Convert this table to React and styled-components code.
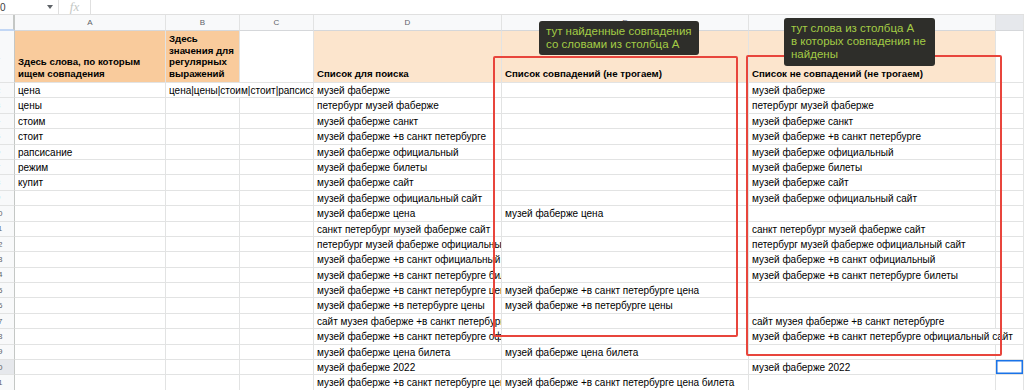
import React from "react";
import styled, { createGlobalStyle } from "styled-components";

const COLS = "15px 151px 74px 74px 188px 247px 247px 1fr";
const ROW_H = 15.4;
const GRID = "#e2e3e3";

const rows = [
  { a: "цена", b: "цена|цены|стоим|стоит|рапсисание|режим|купит", d: "музей фаберже", f: "музей фаберже" },
  { a: "цены", d: "петербург музей фаберже", f: "петербург музей фаберже" },
  { a: "стоим", d: "музей фаберже санкт", f: "музей фаберже санкт" },
  { a: "стоит", d: "музей фаберже +в санкт петербурге", f: "музей фаберже +в санкт петербурге" },
  { a: "рапсисание", d: "музей фаберже официальный", f: "музей фаберже официальный" },
  { a: "режим", d: "музей фаберже билеты", f: "музей фаберже билеты" },
  { a: "купит", d: "музей фаберже сайт", f: "музей фаберже сайт" },
  { d: "музей фаберже официальный сайт", f: "музей фаберже официальный сайт" },
  { d: "музей фаберже цена", e: "музей фаберже цена" },
  { d: "санкт петербург музей фаберже сайт", f: "санкт петербург музей фаберже сайт" },
  { d: "петербург музей фаберже официальный сайт", f: "петербург музей фаберже официальный сайт" },
  { d: "музей фаберже +в санкт официальный", f: "музей фаберже +в санкт официальный" },
  { d: "музей фаберже +в санкт петербурге билеты", f: "музей фаберже +в санкт петербурге билеты" },
  { d: "музей фаберже +в санкт петербурге цена", e: "музей фаберже +в санкт петербурге цена" },
  { d: "музей фаберже +в петербурге цены", e: "музей фаберже +в петербурге цены" },
  { d: "сайт музея фаберже +в санкт петербурге", f: "сайт музея фаберже +в санкт петербурге" },
  { d: "музей фаберже +в санкт петербурге официальный сайт", f: "музей фаберже +в санкт петербурге официальный сайт" },
  { d: "музей фаберже цена билета", e: "музей фаберже цена билета" },
  { d: "музей фаберже 2022", f: "музей фаберже 2022", selected: true },
  { d: "музей фаберже +в санкт петербурге цена билета", e: "музей фаберже +в санкт петербурге цена билета" },
];

const GlobalStyle = createGlobalStyle`
  body {
    margin: 0;
    background: #fff;
    font-family: "Liberation Sans", Arial, sans-serif;
  }
`;

const Sheet = styled.div`
  position: relative;
  width: 1024px;
  height: 390px;
  overflow: hidden;
  background: #fff;
`;

const FormulaBar = styled.div`
  height: 14px;
  display: flex;
  align-items: center;
  border-bottom: 1px solid #e0e0e0;
`;

const NameBox = styled.div`
  width: 58px;
  height: 100%;
  display: flex;
  align-items: center;
  justify-content: space-between;
  padding-right: 5px;
  box-sizing: border-box;
  font-size: 10px;
  color: #3c4043;
`;

const DropArrow = styled.span`
  width: 0;
  height: 0;
  border-left: 3px solid transparent;
  border-right: 3px solid transparent;
  border-top: 4px solid #5f6368;
`;

const Divider = styled.span`
  width: 1px;
  height: 100%;
  background: #e0e0e0;
`;

const Fx = styled.span`
  width: 31px;
  text-align: center;
  font-family: "Liberation Serif", serif;
  font-style: italic;
  font-size: 13px;
  color: #c4c7c5;
  line-height: 14px;
`;

const Row = styled.div`
  display: grid;
  grid-template-columns: ${COLS};
  height: ${(p) => p.$height}px;
`;

const Corner = styled.div`
  background: #f8f9fa;
  border-right: 2px solid #c4c7c5;
  border-bottom: 2px solid #c2d7f5;
  box-sizing: border-box;
`;

const ColLetter = styled.div`
  display: flex;
  align-items: center;
  justify-content: center;
  background: ${(p) => (p.$selected ? "#e6e8ec" : "#f8f9fa")};
  border-right: 1px solid ${GRID};
  border-bottom: 1px solid #d5d7da;
  font-size: 8px;
  color: #5f6368;
`;

const RowNum = styled.div`
  overflow: hidden;
  background: ${(p) => (p.$selected ? "#e6e8ec" : "#f8f9fa")};
  border-right: 1px solid #c4c7c5;
  border-bottom: 1px solid ${GRID};
  font-size: 8px;
  color: #5f6368;
  display: flex;
  align-items: center;

  span {
    flex: none;
    display: block;
    width: 34px;
    margin-left: -19px;
    text-align: center;
  }
`;

const Cell = styled.div`
  position: relative;
  min-width: 0;
  overflow: hidden;
  white-space: nowrap;
  box-sizing: border-box;
  padding: 0 3px;
  border-right: 1px solid ${GRID};
  border-bottom: 1px solid ${GRID};
  background: ${(p) => p.$tone || "transparent"};
  font-size: 10px;
  line-height: ${ROW_H}px;
  color: #000;
  grid-column: ${(p) => (p.$span ? `span ${p.$span}` : "auto")};
  box-shadow: ${(p) => (p.$selected ? "inset 0 0 0 1.5px #1a73e8" : "none")};
`;

const HeadCell = styled(Cell)`
  display: flex;
  align-items: flex-end;
  padding-bottom: 3px;
  font-size: 9.7px;
  font-weight: bold;
  line-height: 11.4px;
`;

const Highlight = styled.div`
  position: absolute;
  left: ${(p) => p.$x}px;
  top: ${(p) => p.$y}px;
  width: ${(p) => p.$w}px;
  height: ${(p) => p.$h}px;
  border: 2px solid #e8453c;
  border-radius: 2px;
  box-sizing: border-box;
  pointer-events: none;
`;

const Note = styled.div`
  position: absolute;
  left: ${(p) => p.$x}px;
  top: ${(p) => p.$y}px;
  width: ${(p) => p.$w}px;
  height: ${(p) => p.$h}px;
  box-sizing: border-box;
  padding: 4px 7px;
  background: #2e2e2a;
  border-radius: 3px;
  color: #a3cc45;
  font-size: 11.5px;
  line-height: 12.8px;
`;

const ORANGE = "#f9cb9c";
const PEACH = "#fce5cd";

function DataRow({ num, row }) {
  return (
    <Row $height={ROW_H}>
      <RowNum $selected={row.selected}>
        <span>{num}</span>
      </RowNum>
      <Cell>{row.a}</Cell>
      {row.b ? (
        <Cell $span={2}>{row.b}</Cell>
      ) : (
        <>
          <Cell />
          <Cell />
        </>
      )}
      <Cell>{row.d}</Cell>
      <Cell>{row.e}</Cell>
      {row.f && row.f.length > 45 ? (
        <Cell $span={2}>{row.f}</Cell>
      ) : (
        <>
          <Cell>{row.f}</Cell>
          <Cell $selected={row.selected} />
        </>
      )}
    </Row>
  );
}

export default function App() {
  return (
    <>
      <GlobalStyle />
      <Sheet>
        <FormulaBar>
          <NameBox>
            0<DropArrow />
          </NameBox>
          <Divider />
          <Fx>fx</Fx>
          <Divider />
        </FormulaBar>

        <Row $height={16}>
          <Corner />
          {["A", "B", "C", "D", "E", "F"].map((l) => (
            <ColLetter key={l}>{l}</ColLetter>
          ))}
          <ColLetter $selected />
        </Row>

        <Row $height={52}>
          <RowNum>
            <span>1</span>
          </RowNum>
          <HeadCell $tone={ORANGE}>
            <div>
              Здесь слова, по которым
              <br />
              ищем совпадения
            </div>
          </HeadCell>
          <HeadCell $tone={ORANGE}>
            <div>
              Здесь
              <br />
              значения для
              <br />
              регулярных
              <br />
              выражений
            </div>
          </HeadCell>
          <HeadCell />
          <HeadCell $tone={PEACH}>Список для поиска</HeadCell>
          <HeadCell $tone={PEACH}>Список совпадений (не трогаем)</HeadCell>
          <HeadCell $tone={PEACH}>Список не совпадений (не трогаем)</HeadCell>
          <HeadCell />
        </Row>

        {rows.map((row, i) => (
          <DataRow key={i} num={i + 2} row={row} />
        ))}

        <Highlight $x={493} $y={56} $w={245} $h={281} />
        <Highlight $x={746} $y={55} $w={256} $h={301} />

        <Note $x={539} $y={21} $w={160} $h={34}>
          тут найденные совпадения
          <br />
          со словами из столбца А
        </Note>
        <Note $x={784} $y={18} $w={151} $h={48}>
          тут слова из столбца А
          <br />
          в которых совпадения не
          <br />
          найдены
        </Note>
      </Sheet>
    </>
  );
}
